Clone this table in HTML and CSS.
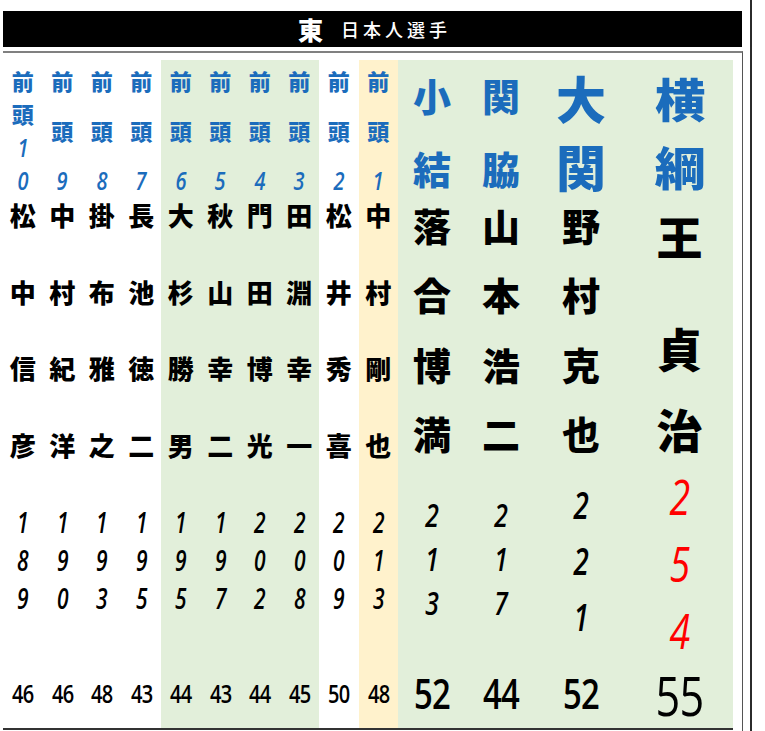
FILE: index.html
```html
<!DOCTYPE html>
<html lang="ja">
<head>
<meta charset="utf-8">
<title>東 日本人選手</title>
<link rel="stylesheet" href="styles.css">
</head>
<body>
<div class="page">
  <div class="banner"><span class="east">東</span><span class="sub">日本人選手</span></div>
  <div class="frame">
    <div class="board">
      <div class="col">
        <div class="rank four"><span>前</span><span>頭</span><span class="num">1</span><span class="num">0</span></div>
        <div class="name"><span>松</span><span>中</span><span>信</span><span>彦</span></div>
        <div class="year"><span>1</span><span>8</span><span>9</span></div>
        <div class="wt">46</div>
      </div>
      <div class="col">
        <div class="rank"><span>前</span><span>頭</span><span class="num">9</span></div>
        <div class="name"><span>中</span><span>村</span><span>紀</span><span>洋</span></div>
        <div class="year"><span>1</span><span>9</span><span>0</span></div>
        <div class="wt">46</div>
      </div>
      <div class="col">
        <div class="rank"><span>前</span><span>頭</span><span class="num">8</span></div>
        <div class="name"><span>掛</span><span>布</span><span>雅</span><span>之</span></div>
        <div class="year"><span>1</span><span>9</span><span>3</span></div>
        <div class="wt">48</div>
      </div>
      <div class="col">
        <div class="rank"><span>前</span><span>頭</span><span class="num">7</span></div>
        <div class="name"><span>長</span><span>池</span><span>徳</span><span>二</span></div>
        <div class="year"><span>1</span><span>9</span><span>5</span></div>
        <div class="wt">43</div>
      </div>
      <div class="col green">
        <div class="rank"><span>前</span><span>頭</span><span class="num">6</span></div>
        <div class="name"><span>大</span><span>杉</span><span>勝</span><span>男</span></div>
        <div class="year"><span>1</span><span>9</span><span>5</span></div>
        <div class="wt">44</div>
      </div>
      <div class="col green">
        <div class="rank"><span>前</span><span>頭</span><span class="num">5</span></div>
        <div class="name"><span>秋</span><span>山</span><span>幸</span><span>二</span></div>
        <div class="year"><span>1</span><span>9</span><span>7</span></div>
        <div class="wt">43</div>
      </div>
      <div class="col green">
        <div class="rank"><span>前</span><span>頭</span><span class="num">4</span></div>
        <div class="name"><span>門</span><span>田</span><span>博</span><span>光</span></div>
        <div class="year"><span>2</span><span>0</span><span>2</span></div>
        <div class="wt">44</div>
      </div>
      <div class="col green">
        <div class="rank"><span>前</span><span>頭</span><span class="num">3</span></div>
        <div class="name"><span>田</span><span>淵</span><span>幸</span><span>一</span></div>
        <div class="year"><span>2</span><span>0</span><span>8</span></div>
        <div class="wt">45</div>
      </div>
      <div class="col">
        <div class="rank"><span>前</span><span>頭</span><span class="num">2</span></div>
        <div class="name"><span>松</span><span>井</span><span>秀</span><span>喜</span></div>
        <div class="year"><span>2</span><span>0</span><span>9</span></div>
        <div class="wt">50</div>
      </div>
      <div class="col gold">
        <div class="rank"><span>前</span><span>頭</span><span class="num">1</span></div>
        <div class="name"><span>中</span><span>村</span><span>剛</span><span>也</span></div>
        <div class="year"><span>2</span><span>1</span><span>3</span></div>
        <div class="wt">48</div>
      </div>
      <div class="col big komusubi">
        <div class="rank"><span>小</span><span>結</span></div>
        <div class="name"><span>落</span><span>合</span><span>博</span><span>満</span></div>
        <div class="year"><span>2</span><span>1</span><span>3</span></div>
        <div class="wt">52</div>
      </div>
      <div class="col big sekiwake">
        <div class="rank"><span>関</span><span>脇</span></div>
        <div class="name"><span>山</span><span>本</span><span>浩</span><span>二</span></div>
        <div class="year"><span>2</span><span>1</span><span>7</span></div>
        <div class="wt">44</div>
      </div>
      <div class="col big ozeki">
        <div class="rank"><span>大</span><span>関</span></div>
        <div class="name"><span>野</span><span>村</span><span>克</span><span>也</span></div>
        <div class="year"><span>2</span><span>2</span><span>1</span></div>
        <div class="wt">52</div>
      </div>
      <div class="col big yokozuna">
        <div class="rank"><span>横</span><span>綱</span></div>
        <div class="name"><span class="oh">王</span><span class="sada">貞</span><span>治</span></div>
        <div class="year"><span>2</span><span>5</span><span>4</span></div>
        <div class="wt">55</div>
      </div>
    </div>
  </div>
</div>
</body>
</html>
```

FILE: styles.css
```css
* { box-sizing: border-box; }

body {
  margin: 0;
  background: #ffffff;
  font-family: "Noto Sans CJK JP", sans-serif;
  color: #000;
}

.page {
  width: 752px;
  height: 731px;
  padding: 11px 0 0 3px;
  border-right: 2px solid #2b2b2b;
  overflow: hidden;
}

.banner {
  width: 739px;
  height: 36px;
  background: #000;
  color: #fff;
  display: flex;
  justify-content: center;
  align-items: center;
  gap: 18px;
  padding-left: 4px;
}
.east { font-size: 25px; font-weight: 900; line-height: 1; }
.sub { font-size: 18px; letter-spacing: 4px; line-height: 1; font-weight: 500; }

.frame {
  margin-top: 4px;
  width: 740px;
  height: 690px;
  border-top: 2px solid #808080;
  border-right: 1px solid #555;
  padding-top: 7px;
}

.board {
  display: flex;
  width: 730px;
  border-bottom: 2px solid #333;
}

.col { width: 39.5px; flex: none; display: flex; flex-direction: column; align-items: stretch; }
.col.green, .col.big { background: #e2efda; }
.col.gold { background: #fff2cc; }
.komusubi { width: 68px; }
.sekiwake { width: 70px; }
.ozeki { width: 90px; }
.yokozuna { width: 107px; }

.rank, .name, .year {
  display: flex;
  flex-direction: column;
  justify-content: space-between;
  align-items: center;
}

/* rank row */
.rank {
  height: 140px;
  padding: 8px 0;
  color: #1b6cbc;
  font-weight: 900;
  font-size: 22px;
  line-height: 24px;
}
.rank .num {
  font-family: "Open Sans", sans-serif;
  font-style: italic;
  font-weight: 600;
  font-size: 25px;
  transform: scaleX(0.8);
}
.big .rank { font-size: 38px; line-height: 40px; padding: 15px 0 12px; }
.ozeki .rank { font-size: 50px; line-height: 50px; padding: 12px 0 10px; }
.yokozuna .rank { font-size: 46px; line-height: 48px; padding: 13px 0 11px; }
.yokozuna .rank span { transform: scaleX(1.1); }

/* name row */
.name {
  height: 270px;
  padding: 0 0 10px;
  font-weight: 900;
  font-size: 26px;
  line-height: 30px;
}
.big .name { font-size: 38px; line-height: 40px; padding: 5px 0 17px; }
.yokozuna .name { font-size: 46px; line-height: 46px; justify-content: flex-start; padding: 12px 0 0; }
.yokozuna .sada { margin-top: 66px; }
.yokozuna .name span + span + span { margin-top: 35px; }

/* year row */
.year {
  height: 185px;
  padding: 37px 0 42px;
  font-family: "Open Sans", sans-serif;
  font-style: italic;
  font-weight: 600;
  font-size: 28px;
  line-height: 30px;
}
.year span { transform: scaleX(0.75); }
.komusubi .year, .sekiwake .year { font-size: 33px; line-height: 36px; padding: 27px 0 34px; }
.ozeki .year { font-size: 37px; line-height: 40px; padding: 15px 0 18px; }
.yokozuna .year { font-size: 50px; line-height: 36px; padding: 8px 0 7px; color: #ff0000; font-weight: 500; }

/* weight row */
.wt {
  height: 73px;
  display: flex;
  align-items: center;
  justify-content: center;
  padding-top: 3px;
  font-family: "Open Sans", sans-serif;
  font-weight: 600;
  font-size: 25px;
  line-height: 1;
  letter-spacing: -1px;
  transform: scaleX(0.8);
}
.big .wt { font-size: 41px; }
.yokozuna .wt { font-size: 54px; padding-top: 6px; font-weight: 500; }
```
